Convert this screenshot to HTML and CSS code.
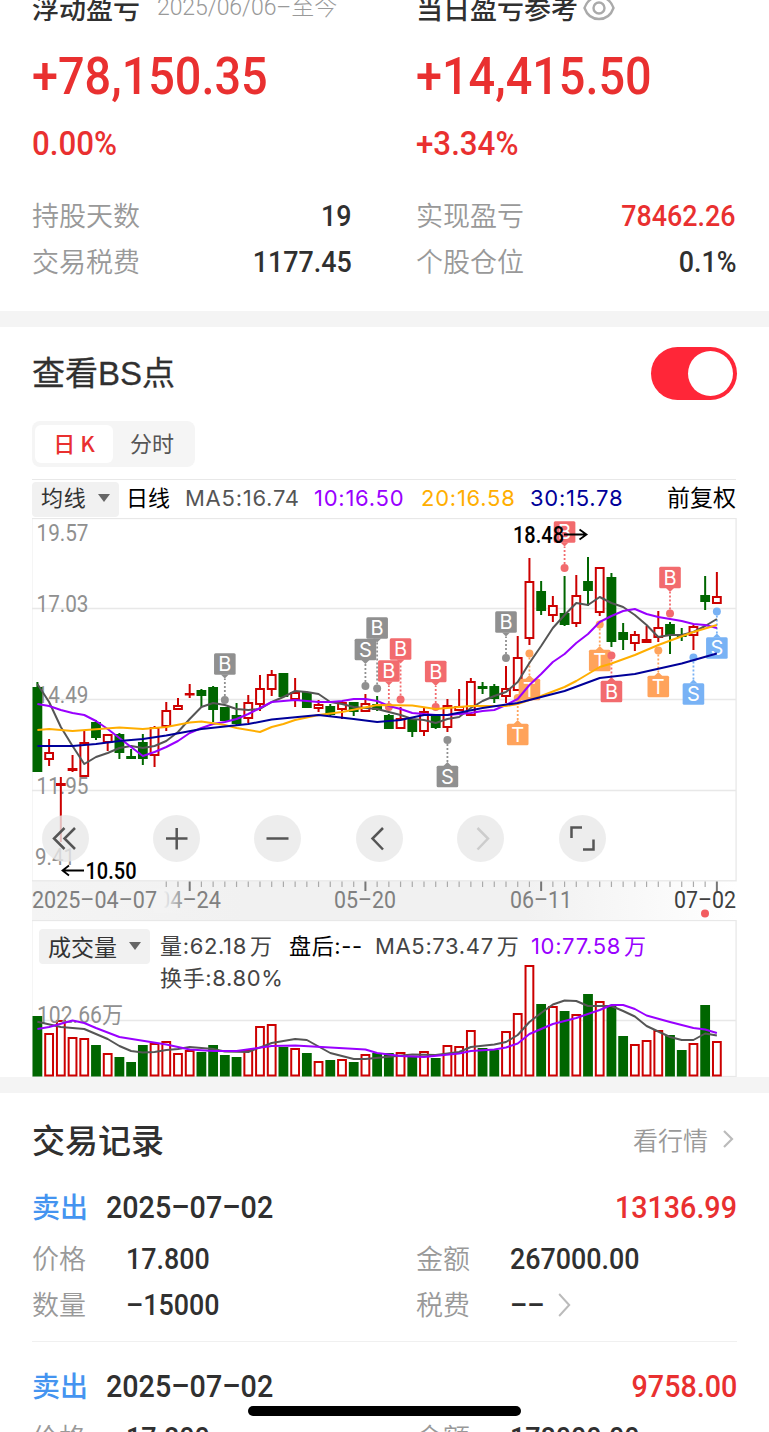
FILE: index.html
```html
<!DOCTYPE html>
<html lang="zh-CN">
<head>
    <meta charset="UTF-8">
    <meta name="viewport" content="width=device-width, initial-scale=1.0">
    <title>持仓盈亏</title>
    <link rel="stylesheet" href="styles.css">
</head>
<body>
    <section class="summary">
        <div class="summary-col">
            <div class="summary-head">浮动盈亏<span class="period">2025/06/06–至今</span></div>
            <div class="amount">+78,150.35</div>
            <div class="percent">0.00%</div>
            <div class="row"><span class="label">持股天数</span><span class="num">19</span></div>
            <div class="row"><span class="label">交易税费</span><span class="num">1177.45</span></div>
        </div>
        <div class="summary-col">
            <div class="summary-head">当日盈亏参考
                <svg class="eye" width="32" height="26" viewBox="0 0 32 26"><path d="M1.500 13C4 6 9.500 2 16 2s12 4 14.500 11C28 20 22.500 24 16 24S4 20 1.500 13z"/><circle cx="16" cy="13" r="5.500"/></svg>
            </div>
            <div class="amount">+14,415.50</div>
            <div class="percent">+3.34%</div>
            <div class="row"><span class="label">实现盈亏</span><span class="num red">78462.26</span></div>
            <div class="row"><span class="label">个股仓位</span><span class="num">0.1%</span></div>
        </div>
    </section>

    <section class="bs">
        <div class="bs-head">
            <h2>查看BS点</h2>
            <div class="switch"><i></i></div>
        </div>
        <div class="tabs">
            <span class="tab active">日 K</span>
            <span class="tab">分时</span>
        </div>

        <div class="ma-bar">
            <span class="select ma-select">均线<i class="caret"></i></span>
            <span class="ma-day">日线</span>
            <span class="ma5">MA5:16.74</span>
            <span class="ma10">10:16.50</span>
            <span class="ma20">20:16.58</span>
            <span class="ma30">30:15.78</span>
            <span class="adjust">前复权</span>
        </div>

        <div class="kline">
            <svg id="kline" width="705" height="402" viewBox="32 518 705 402"></svg>
            <div class="tools">
                <button class="tool"><svg viewBox="0 0 47 47"><path d="M22.500 13L12 23.500 22.500 34M33 13L22.500 23.500 33 34"/></svg></button>
                <button class="tool"><svg viewBox="0 0 47 47"><path d="M13 23.500h21.500M23.700 13v21.500"/></svg></button>
                <button class="tool"><svg viewBox="0 0 47 47"><path d="M12.500 23.500h22"/></svg></button>
                <button class="tool"><svg viewBox="0 0 47 47"><path d="M27 13L16.500 23.500 27 34.500"/></svg></button>
                <button class="tool disabled"><svg viewBox="0 0 47 47"><path d="M20.500 13L31 23.500 20.500 34.500"/></svg></button>
                <button class="tool"><svg viewBox="0 0 47 47"><path d="M12.500 23V12.500h10.500M34.500 24.500V34.500H24"/></svg></button>
            </div>
        </div>

        <div class="volume">
            <svg id="volume" width="705" height="157" viewBox="32 920 705 157"></svg>
            <div class="vol-legend">
                <span class="select vol-select">成交量<i class="caret"></i></span>
                <div class="vol-info">
                    <span class="vol-num">量:62.18<b>万</b></span>
                    <span class="vol-after">盘后:--</span>
                    <span class="vol-ma5">MA5:73.47<b>万</b></span>
                    <span class="ma10">10:77.58<b>万</b></span>
                    <div class="turnover">换手:8.80%</div>
                </div>
            </div>
        </div>
    </section>

    <section class="trades">
        <div class="trades-head">
            <h2>交易记录</h2>
            <span class="more">看行情<svg width="12" height="18" viewBox="0 0 12 18"><path d="M2 1l8 8-8 8"/></svg></span>
        </div>
        <div class="trade">
            <div class="trade-top"><span class="side">卖出</span><span class="date">2025–07–02</span><span class="date profit">13136.99</span></div>
            <div class="trade-grid">
                <span class="label">价格</span><span class="num">17.800</span>
                <span class="label">金额</span><span class="num">267000.00</span>
                <span class="label">数量</span><span class="num">–15000</span>
                <span class="label">税费</span><span class="num">––<svg width="15" height="24" viewBox="0 0 15 24"><path d="M2 1l11 11L2 23"/></svg></span>
            </div>
        </div>
        <div class="trade">
            <div class="trade-top"><span class="side">卖出</span><span class="date">2025–07–02</span><span class="date profit">9758.00</span></div>
            <div class="trade-grid">
                <span class="label">价格</span><span class="num">17.800</span>
                <span class="label">金额</span><span class="num">178000.00</span>
            </div>
        </div>
    </section>
    <div class="home-bar"></div>

    <script src="chart.js"></script>
</body>
</html>
```
FILE: styles.css
```css
* {
    box-sizing: border-box;
}
body {
    margin: 0;
    height: 1432px;
    overflow: hidden;
    background: #fff;
    color: #303030;
    font-family: "Noto Sans CJK SC", sans-serif;
}
h2 {
    margin: 0;
    font-size: 33px;
    line-height: 44px;
    font-weight: 500;
}
svg {
    display: block;
}
.summary {
    display: grid;
    grid-template-columns: 320px 320px;
    column-gap: 64px;
    height: 311px;
    padding: 0 32px;
}
.summary-head {
    display: flex;
    align-items: flex-end;
    height: 23px;
    font-size: 27px;
    line-height: 30px;
    font-weight: 500;
    white-space: nowrap;
}
.period {
    margin-left: 17px;
    color: #999;
    font-family: Roboto, "Noto Sans CJK SC", sans-serif;
    font-size: 23px;
    font-weight: 300;
    letter-spacing: -0.1px;
}
.eye {
    margin: 0 0 2px 5px;
    fill: none;
    stroke: #aaa;
    stroke-width: 2.4;
}
.amount {
    margin-top: 24px;
    color: #e93030;
    font-family: Roboto, sans-serif;
    font-size: 52px;
    line-height: 60px;
    font-weight: 500;
    transform: scaleX(0.9);
    transform-origin: left;
}
.percent {
    margin: 16px 0 30px;
    color: #e93030;
    font-family: Roboto, sans-serif;
    font-size: 34px;
    line-height: 40px;
    font-weight: 500;
    transform: scaleX(0.92);
    transform-origin: left;
}
.row {
    display: flex;
    justify-content: space-between;
    line-height: 46px;
}
.label {
    color: #999;
    font-size: 27px;
    line-height: 44px;
    font-weight: 350;
}
.num {
    font-family: Roboto, sans-serif;
    font-size: 29.5px;
    font-weight: 500;
    transform: scaleX(0.91);
    transform-origin: right;
}
.red {
    color: #e93030;
}

.bs {
    border-top: 16px solid #f4f4f4;
    border-bottom: 16px solid #f4f4f4;
    padding: 20px 32px 0;
    height: 782px;
}
.bs-head {
    display: flex;
    justify-content: space-between;
    align-items: center;
    height: 53px;
}
.bs-head h2 {
    font-family: "Liberation Sans", "Noto Sans CJK SC", sans-serif;
    font-weight: 400;
    -webkit-text-stroke: 0.3px #303030;
}
.switch {
    width: 86px;
    height: 53px;
    padding: 4px;
    border-radius: 27px;
    background: #ff2638;
}
.switch i {
    display: block;
    width: 45px;
    height: 45px;
    margin-left: auto;
    border-radius: 50%;
    background: #fff;
}
.tabs {
    display: flex;
    width: 163px;
    height: 46px;
    margin-top: 21px;
    padding: 4px 3px;
    border-radius: 8px;
    background: #f5f5f5;
}
.tab {
    width: 78px;
    border-radius: 6px;
    color: #555;
    font-size: 22px;
    line-height: 35px;
    text-align: center;
}
.tab.active {
    background: #fff;
    color: #e93030;
    font-weight: 500;
}
.ma-bar {
    display: flex;
    align-items: center;
    width: 704px;
    height: 39px;
    margin-top: 12px;
    border-top: 1px solid #e8e8e8;
    font-family: Inter, "Noto Sans CJK SC", sans-serif;
    font-size: 22px;
    line-height: 30px;
    letter-spacing: 0.75px;
    white-space: nowrap;
}
.ma-bar > span {
    padding-bottom: 2px;
}
.select {
    display: flex;
    align-items: center;
    justify-content: space-between;
    height: 35px;
    padding: 0 9px 2px;
    border-radius: 4px;
    background: #f1f1f1;
    color: #333;
}
.ma-select {
    width: 87px;
}
.caret {
    border: 6px solid transparent;
    border-top: 8px solid #666;
    border-bottom: 0;
}
.ma-day {
    width: 66px;
    padding-left: 7px;
    color: #000;
    letter-spacing: 0;
}
.ma5 {
    width: 129px;
    color: #555;
}
.ma10 {
    color: #9900ff;
}
.ma-bar .ma10 {
    width: 107px;
}
.ma20 {
    width: 109px;
    color: #ffae00;
}
.ma30 {
    color: #000099;
}
.adjust {
    margin-left: auto;
    color: #000;
    font-size: 23px;
    letter-spacing: 0;
}
.kline, .volume {
    position: relative;
    width: 705px;
}
.tools {
    position: absolute;
    left: 9.5px;
    top: 297px;
    display: flex;
    gap: 54.5px;
}
.tool {
    width: 47px;
    height: 47px;
    padding: 0;
    border: 0;
    border-radius: 50%;
    background: rgba(232, 232, 232, 0.8);
}
.tool:first-child {
    margin-right: 9.5px;
}
.tool path {
    fill: none;
    stroke: #555;
    stroke-width: 2.5;
}
.tool.disabled path {
    stroke: #ccc;
}
.vol-legend {
    position: absolute;
    left: 7px;
    top: 9px;
    display: flex;
    font-family: Inter, "Noto Sans CJK SC", sans-serif;
    font-size: 22px;
    letter-spacing: 0.65px;
    white-space: nowrap;
    color: #444;
}
.vol-select {
    width: 111px;
    font-size: 23px;
    letter-spacing: 0;
}
.vol-info {
    display: grid;
    grid-template-columns: 129px 86px 156px auto;
    margin-left: 10px;
    line-height: 34px;
}
.vol-info b {
    margin-left: 3px;
    font-weight: 400;
}
.vol-after {
    color: #000;
}
.turnover {
    grid-column: 1 / 3;
    line-height: 30px;
}

/* svg charts */
.frame, .grid {
    fill: none;
    stroke: #e8e8e8;
    stroke-width: 1.3;
}
.up {
    fill: #fff;
    stroke: #cc0000;
    stroke-width: 2;
}
.down {
    fill: #006600;
    stroke: #006600;
    stroke-width: 2;
}
.line {
    fill: none;
    stroke-width: 2;
    stroke-linejoin: round;
}
.scale, .axis-text {
    fill: #909090;
    font: 400 23px Roboto, "Noto Sans CJK SC", sans-serif;
}
.axis-text {
    fill: #808080;
}
.axis-text.last {
    fill: #404040;
}
.peak {
    fill: #000;
    font: 500 23px Roboto, sans-serif;
}
.peak-arrow {
    fill: none;
    stroke: #000;
    stroke-width: 1.8;
}
.tick {
    stroke: #aaa;
    stroke-width: 1.2;
}
.tick.major {
    stroke: #777;
    stroke-width: 2;
}
.mark-text {
    fill: #fff;
    font: 400 20px Inter, sans-serif;
    text-anchor: middle;
}

.trades {
    padding: 24px 32px 0;
}
.trades-head {
    display: flex;
    justify-content: space-between;
    align-items: center;
}
.more {
    display: flex;
    align-items: center;
    color: #999;
    font-size: 25px;
    line-height: 44px;
    font-weight: 350;
}
.more svg {
    margin: 0 3px 0 14px;
}
.more path, .num path {
    fill: none;
    stroke: #bbb;
    stroke-width: 2.2;
}
.trade {
    height: 180px;
    padding-top: 21px;
}
.trade + .trade {
    padding-top: 19px;
    border-top: 1px solid #f0f0f0;
}
.trade-top {
    display: flex;
    align-items: center;
    height: 50px;
}
.side {
    width: 74px;
    padding-bottom: 2px;
    color: #4494f0;
    font-size: 28px;
    font-weight: 500;
}
.date {
    font-family: Roboto, sans-serif;
    font-size: 31px;
    font-weight: 500;
    transform: scaleX(0.925);
    transform-origin: left;
}
.profit {
    margin-left: auto;
    color: #e93030;
    transform-origin: right;
}
.trade-grid {
    display: grid;
    grid-template-columns: 94px 290px 94px auto;
    padding-top: 4px;
    line-height: 46px;
}
.trade-grid .num {
    display: flex;
    align-items: center;
    transform-origin: left;
}
.num svg {
    margin-left: 14px;
}
.home-bar {
    position: fixed;
    left: 248px;
    top: 1406px;
    width: 273px;
    height: 10px;
    border-radius: 5px;
    background: #000;
}
```
FILE: chart.js
```js
const STEP = 11.715;
const X0 = 37.4;
const px = i => X0 + i * STEP;

// direction, high, body top, body bottom, low
const candles = [
    ['d', 682, 687, 772, 772], ['u', 739, 752, 760, 766], ['u', 777, 783, 786, 842], ['u', 755, 768, 771, 772],
    ['u', 730, 742, 777, 777], ['d', 720, 722, 738, 740], ['u', 734, 734, 743, 751], ['d', 733, 734, 753, 759],
    ['d', 749, 756, 759, 759], ['d', 734, 742, 759, 765], ['u', 726, 727, 756, 767], ['u', 702, 710, 727, 731],
    ['u', 698, 705, 710, 710], ['u', 684, 693, 695, 698], ['d', 689, 690, 696, 707], ['d', 686, 687, 710, 722],
    ['d', 707, 707, 721, 721], ['d', 703, 715, 724, 725], ['u', 695, 702, 719, 723], ['u', 675, 688, 705, 711],
    ['u', 670, 674, 690, 696], ['d', 673, 673, 697, 697], ['u', 678, 692, 700, 707], ['d', 692, 692, 708, 708],
    ['u', 700, 704, 709, 712], ['d', 704, 706, 715, 717], ['u', 701, 702, 710, 719], ['d', 702, 702, 712, 716],
    ['u', 694, 703, 712, 712], ['d', 696, 704, 710, 711], ['d', 714, 715, 729, 729], ['u', 707, 718, 729, 729],
    ['d', 719, 719, 732, 737], ['u', 708, 711, 732, 736], ['d', 714, 715, 728, 729], ['u', 699, 705, 728, 732],
    ['u', 689, 706, 711, 711], ['u', 678, 681, 716, 716], ['d', 682, 686, 689, 694], ['d', 684, 686, 699, 703],
    ['u', 666, 688, 697, 703], ['u', 636, 657, 691, 691], ['u', 558, 581, 639, 645], ['d', 581, 591, 611, 615],
    ['u', 596, 605, 616, 622], ['d', 576, 613, 625, 626], ['u', 575, 595, 624, 627], ['d', 557, 581, 591, 606],
    ['u', 567, 567, 613, 616], ['d', 573, 577, 642, 647], ['d', 623, 632, 640, 650], ['u', 631, 634, 644, 651],
    ['u', 626, 639, 643, 643], ['u', 611, 627, 638, 642], ['d', 622, 624, 635, 654], ['d', 628, 634, 637, 641],
    ['u', 625, 626, 636, 650], ['d', 576, 595, 602, 610], ['u', 572, 596, 604, 604]
];

// moving averages as [index, y]
const ma5 = [684, 702, 727, 746, 764, 757, 753, 748, 746, 748, 746, 741, 732, 719, 707, 703, 705, 709, 710, 709,
    702, 697, 691, 692, 694, 702, 704, 707, 708, 709, 712, 715, 719, 720, 723, 719, 717, 708, 701, 696,
    692, 682, 663, 646, 628, 615, 603, 605, 597, 603, 607, 615, 625, 637, 635, 635, 632, 626, 619].map((y, i) => [i, y]);
const ma10 = [704, 706, 710, 713, 715, 721, 729, 738, 747, 756, 752, 747, 741, 733, 728, 724, 722, 719, 714, 708,
    702, 701, 700, 701, 702, 702, 701, 699, 699, 701, 706, 709, 713, 714, 715, 715, 714, 713, 711, 710,
    705, 699, 685, 674, 662, 654, 643, 634, 622, 616, 611, 609, 614, 617, 619, 621, 624, 625, 628].map((y, i) => [i, y]);
const ma20 = [[0, 730], [1, 729], [3, 731], [7, 727.5], [9, 729], [11, 727], [13, 722.5], [14, 721.5], [16, 725], [17, 728],
    [19, 732], [20, 727], [21, 724], [22, 720], [24, 715], [26, 712], [29, 705], [32, 705.5], [34, 709], [37, 706],
    [40, 706], [41, 704], [43, 696], [45, 687], [46, 681], [48, 667], [49, 663.5], [51, 655], [53, 645], [56, 632], [58, 625]];
const ma30 = [[0, 746], [3, 746], [5, 744], [7, 741], [9, 739], [11, 735.5], [14, 729], [18, 724], [20, 719.5], [24, 715],
    [27, 719], [29, 722], [31, 720], [33, 715], [35, 715], [38, 708], [41, 703], [45, 691], [48, 678], [51, 674], [55, 663.5], [58, 653.5]];

// label, colour, index, dot y, box centre y
const GRAY = '#909090', RED = '#f26b6e', ORANGE = '#ffa35b', BLUE = '#78b2f5';
const marks = [
    ['B', GRAY, 16, 700, 664], ['S', GRAY, 28, 686, 649.5], ['B', GRAY, 29, 688.5, 628], ['B', RED, 31, 699.5, 649],
    ['B', RED, 30, 707, 671], ['B', RED, 34, 707, 671.5], ['S', GRAY, 35, 740, 776.5], ['B', GRAY, 40, 658, 622],
    ['T', ORANGE, 41, 698, 734.5], ['T', ORANGE, 42, 653.5, 689.5], ['B', RED, 45, 568, 532], ['T', ORANGE, 48, 624.5, 660.5],
    ['B', RED, 49, 655.5, 691.5], ['T', ORANGE, 53, 650.5, 686.5], ['B', RED, 54, 613.5, 577.5],
    ['S', BLUE, 56, 657.5, 694], ['S', BLUE, 58, 611.5, 648]
];

const vols = [1016, 1033, 1020, 1037, 1038, 1045, 1053, 1057, 1062, 1045, 1043, 1041, 1053, 1050, 1052, 1045, 1055, 1057, 1049, 1026,
    1024, 1047, 1048, 1053, 1061, 1060, 1059, 1062, 1054, 1053, 1053, 1052, 1057, 1051, 1058, 1045, 1046, 1030, 1048, 1050,
    1031, 1013, 965, 1004, 1006, 1011, 1014, 994, 1001, 1006, 1036, 1044, 1040, 1030, 1035, 1050, 1043, 1005, 1041];
const volMa5 = [[0, 1021.7], [2, 1027], [4, 1029], [5, 1034], [6, 1039], [7, 1046], [8, 1051], [9, 1052.5], [10, 1052], [11, 1050],
    [12, 1049], [13, 1047], [15, 1049], [16, 1051.5], [18, 1052], [20, 1043], [22, 1039], [23, 1040], [25, 1053], [27, 1059],
    [28, 1059], [32, 1054.5], [34, 1055], [36, 1052], [37, 1047], [39, 1044.5], [40, 1042], [41, 1035], [42, 1022], [43, 1013],
    [44, 1004.5], [45, 1000.5], [46, 1001], [47, 1006], [49, 1006], [50, 1011], [51, 1016.5], [52, 1026], [54, 1037], [55, 1040],
    [56, 1040], [57, 1033.5], [58, 1035.5]];
const volMa10 = [[0, 1029], [1, 1027], [3, 1020.5], [4, 1023], [5, 1028], [7, 1037], [11, 1044.5], [13, 1049.5], [15, 1051], [17, 1051],
    [20, 1046], [22, 1045.5], [28, 1049.5], [29, 1053], [31, 1056], [33, 1057], [36, 1053.5], [37, 1051], [39, 1049.5], [40, 1047.5],
    [41, 1043.5], [42, 1034], [44, 1024], [46, 1018], [48, 1010], [49, 1005], [50, 1005], [51, 1009], [52, 1015.5], [54, 1022],
    [56, 1028], [57, 1029.5], [58, 1033]];

function polyline(points, color) {
    return `<polyline class="line" stroke="${color}" points="${points.map(p => px(p[0]) + ',' + p[1]).join(' ')}"/>`;
}

function text(cls, x, y, width, str) {
    return `<text class="${cls}" x="${x}" y="${y}" textLength="${width}" lengthAdjust="spacingAndGlyphs">${str}</text>`;
}

function drawCandle([dir, high, top, bottom, low], i) {
    const x = px(i);
    const cls = dir === 'u' ? 'up' : 'down';
    const height = Math.max(bottom - top - 2, 0.5);
    return `<path class="${cls}" d="M${x} ${high}V${top}M${x} ${bottom}V${low}"/>
        <rect class="${cls}" x="${x - 3.9}" y="${top + 1}" width="7.8" height="${height}"/>`;
}

function drawMark([label, color, i, dot, box]) {
    const x = px(i);
    const edge = box < dot ? box + 10.5 : box - 10.5;
    const tip = box < dot ? edge + 4 : edge - 4;
    return `<g>
        <path d="M${x} ${dot}V${tip}" stroke="${color}" stroke-width="1.8" stroke-dasharray="2 2"/>
        <circle cx="${x}" cy="${dot}" r="4" fill="${color}"/>
        <path d="M${x - 4} ${edge}L${x} ${tip}L${x + 4} ${edge}z" fill="${color}"/>
        <rect x="${x - 10.8}" y="${box - 10.8}" width="21.6" height="21.6" rx="1.5" fill="${color}"/>
        <text class="mark-text" x="${x}" y="${box + 7.2}">${label}</text>
    </g>`;
}

function drawKline() {
    let out = `<defs><linearGradient id="axisBg"><stop offset="0" stop-color="#f4f4f4"/><stop offset="0.3" stop-color="#f1f1f1"/>
        <stop offset="0.7" stop-color="#f1f1f1"/><stop offset="1" stop-color="#fff"/></linearGradient>
        <linearGradient id="fade"><stop offset="0.3" stop-color="#f3f3f3"/><stop offset="1" stop-color="#f3f3f3" stop-opacity="0"/></linearGradient></defs>`;
    out += '<rect x="32" y="881" width="705" height="39" fill="url(#axisBg)"/>';
    out += '<rect class="frame" x="31.800" y="518.500" width="704.300" height="362.300"/>';
    out += '<path class="grid" d="M32 608.500H736M32 699.500H736M32 790.500H736"/>';
    out += text('scale', 36.5, 541, 52, '19.57') + text('scale', 36.5, 612, 52, '17.03');
    out += text('scale', 36.5, 703, 52, '14.49') + text('scale', 36.5, 794, 52, '11.95');
    out += text('scale', 35, 865, 40, '9.41');
    out += candles.map(drawCandle).join('');
    out += marks.map(drawMark).join('');
    out += polyline(ma5, '#555') + polyline(ma10, '#9900ff') + polyline(ma20, '#ffae00') + polyline(ma30, '#000099');
    out += text('peak', 513, 543, 51, '18.48') + '<path class="peak-arrow" d="M564 534.500H586M579.500 529.500L586.500 534.500L579.500 539.500"/>';
    out += text('peak', 85.5, 879, 51, '10.50') + '<path class="peak-arrow" d="M84 870.500H62.500M69 865.500L62.500 870.500L69 875.500"/>';
    for (let i = 11; i < 59; i++) {
        const major = i % 15 === 13;
        out += `<path class="tick ${major ? 'major' : ''}" d="M${px(i)} 881.500V${major ? 891 : 887}"/>`;
    }
    out += text('axis-text', 158, 908, 63, '04–24');
    out += '<rect x="154" y="889" width="32" height="24" fill="url(#fade)"/>';
    out += text('axis-text', 32, 908, 125, '2025–04–07') + text('axis-text', 334, 908, 62, '05–20');
    out += text('axis-text', 510, 908, 62, '06–11') + text('axis-text last', 674, 908, 62, '07–02');
    out += '<circle cx="705" cy="913.500" r="4" fill="#f25c5f"/>';
    document.getElementById('kline').innerHTML = out;
}

function drawVolume() {
    let out = '<rect class="frame" x="31.800" y="920.500" width="704.300" height="156"/><path class="grid" d="M32 1020.500H736"/>';
    out += vols.map((y, i) => `<rect class="${candles[i][0] === 'u' ? 'up' : 'down'}" x="${px(i) - 3.9}" y="${y + 1}" width="7.8" height="${1074.5 - y}"/>`).join('');
    out += text('scale', 37, 1023, 86, '102.66万');
    out += polyline(volMa5, '#555') + polyline(volMa10, '#9900ff');
    document.getElementById('volume').innerHTML = out;
}

drawKline();
drawVolume();
```
